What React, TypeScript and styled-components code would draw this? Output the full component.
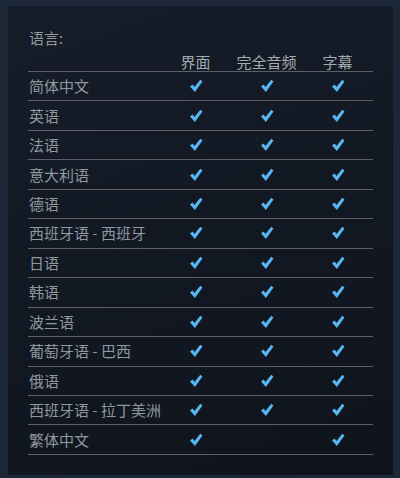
import React from "react";
import styled, { createGlobalStyle } from "styled-components";

const Global = createGlobalStyle`
  html, body { margin: 0; padding: 0; background: #1c2838; }
  body { width: 400px; height: 478px; overflow: hidden; font-family: "Noto Sans CJK SC", "Noto Sans", sans-serif; }
`;

const Page = styled.div`
  padding: 6px 7px 3px 8px;
  height: 478px;
  box-sizing: border-box;
`;

const Panel = styled.div`
  height: 469px;
  box-sizing: border-box;
  padding: 22px 20px 0 20px;
  background: linear-gradient(160deg, #161d29 0%, #121822 55%, #0f141b 100%);
`;

const Title = styled.div`
  font-size: 15px;
  line-height: 20px;
  color: #8f98a0;
  padding-left: 1px;
`;

const Row = styled.div<{ $header?: boolean }>`
  display: grid;
  grid-template-columns: 132px repeat(3, 71px);
  width: 345px;
  height: ${(p) => (p.$header ? "23px" : "28.46px")};
  border-bottom: 1px solid #5b6067;
  align-items: ${(p) => (p.$header ? "end" : "center")};
  color: ${(p) => (p.$header ? "#a3aab1" : "#8f98a0")};
  font-size: 15px;
  line-height: 18px;
`;

const Name = styled.div`
  padding-left: 1px;
  white-space: nowrap;
`;

const Cell = styled.div`
  display: flex;
  justify-content: center;
  align-items: center;
  white-space: nowrap;
`;

const Check = () => (
  <svg width="14" height="14" viewBox="0 0 14 14">
    <path
      d="M1.0 7.6 L3.6 5.5 L5.5 8.0 L11.3 0.7 L13.5 2.4 L5.9 12.9 Z"
      fill="#58b7f3"
    />
  </svg>
);

type Lang = [string, boolean, boolean, boolean];

const langs: Lang[] = [
  ["简体中文", true, true, true],
  ["英语", true, true, true],
  ["法语", true, true, true],
  ["意大利语", true, true, true],
  ["德语", true, true, true],
  ["西班牙语 - 西班牙", true, true, true],
  ["日语", true, true, true],
  ["韩语", true, true, true],
  ["波兰语", true, true, true],
  ["葡萄牙语 - 巴西", true, true, true],
  ["俄语", true, true, true],
  ["西班牙语 - 拉丁美洲", true, true, true],
  ["繁体中文", true, false, true],
];

export default function App() {
  return (
    <Page>
      <Global />
      <Panel>
        <Title>语言:</Title>
        <Row $header>
          <Name />
          <Cell>界面</Cell>
          <Cell>完全音频</Cell>
          <Cell>字幕</Cell>
        </Row>
        {langs.map(([name, a, b, c]) => (
          <Row key={name}>
            <Name>{name}</Name>
            <Cell>{a && <Check />}</Cell>
            <Cell>{b && <Check />}</Cell>
            <Cell>{c && <Check />}</Cell>
          </Row>
        ))}
      </Panel>
    </Page>
  );
}
